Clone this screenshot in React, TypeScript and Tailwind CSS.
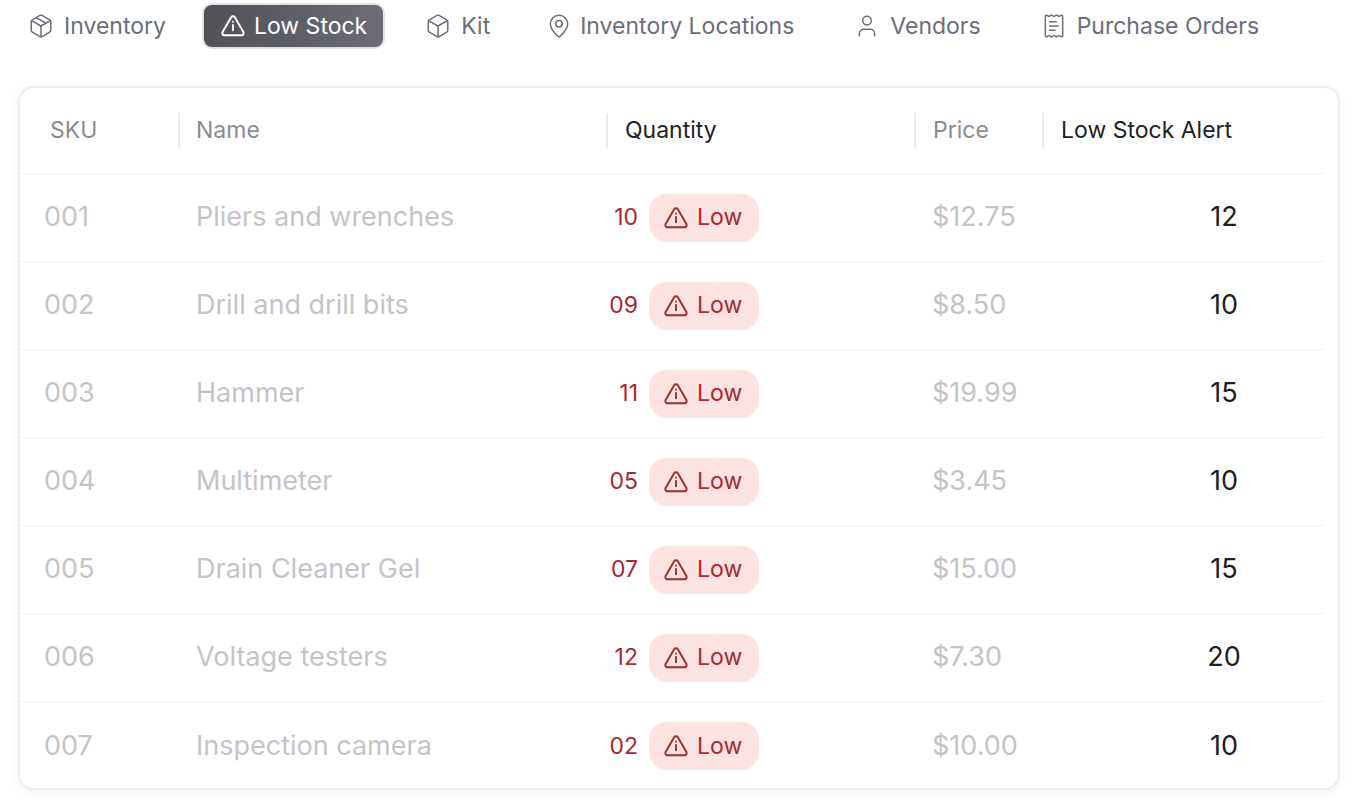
import { Package, Box, MapPin, User, ReceiptText } from "lucide-react";

function Warn({ className = "" }: { className?: string }) {
  return (
    <svg viewBox="0 0 24 24" fill="none" stroke="currentColor" strokeWidth={1.8} strokeLinecap="round" strokeLinejoin="round" className={className}>
      <path d="M10.3 3.9 2.4 17.6A2 2 0 0 0 4.1 20.6h15.8a2 2 0 0 0 1.7-3L13.7 3.9a2 2 0 0 0-3.4 0Z" />
      <path d="M12 11v5" />
      <path d="M12 8h.01" />
    </svg>
  );
}

const rows = [
  ["001", "Pliers and wrenches", "10", "$12.75", "12"],
  ["002", "Drill and drill bits", "09", "$8.50", "10"],
  ["003", "Hammer", "11", "$19.99", "15"],
  ["004", "Multimeter", "05", "$3.45", "10"],
  ["005", "Drain Cleaner Gel", "07", "$15.00", "15"],
  ["006", "Voltage testers", "12", "$7.30", "20"],
  ["007", "Inspection camera", "02", "$10.00", "10"],
];

export default function App() {
  const font = { fontFamily: "Inter, 'Noto Sans', sans-serif" };
  return (
    <div className="w-[1357px] h-[808px] bg-white overflow-hidden" style={font}>
      {/* tabs */}
      <div className="flex items-center h-[52px] pl-[28px] text-[23px] text-[#6b6e7a]">
        <div className="flex items-center gap-[10px] mr-[36px]"><Package size={26} strokeWidth={1.4} />Inventory</div>
        <div className="flex items-center gap-[8px] h-[46px] px-[16px] rounded-[10px] border-2 border-[#e2e2e6] bg-gradient-to-r from-[#505157] to-[#6c6d75] text-white mr-[40px]">
          <Warn className="w-[26px] h-[26px]" />Low Stock
        </div>
        <div className="flex items-center gap-[10px] mr-[56px]"><Box size={26} strokeWidth={1.4} />Kit</div>
        <div className="flex items-center gap-[8px] mr-[60px]"><MapPin size={26} strokeWidth={1.4} />Inventory Locations</div>
        <div className="flex items-center gap-[10px] mr-[60px]"><User size={26} strokeWidth={1.4} />Vendors</div>
        <div className="flex items-center gap-[10px]"><ReceiptText size={26} strokeWidth={1.4} />Purchase Orders</div>
      </div>
      {/* card */}
      <div className="mt-[34px] ml-[18px] w-[1322px] h-[704px] rounded-[16px] border-2 border-[#eeeef0] shadow-[0_2px_10px_rgba(0,0,0,0.06)] pr-[14px] overflow-hidden">
        <div className="flex items-center h-[86px] text-[23px] border-b border-[#f0f0f2]">
          <div className="w-[158px] shrink-0 pl-[30px] text-[#8a8b93]">SKU</div>
          <div className="w-[428px] shrink-0 pl-[16px] border-l-2 border-[#ececee] text-[#8a8b93]">Name</div>
          <div className="w-[308px] shrink-0 pl-[17px] border-l-2 border-[#ececee] text-[#222]">Quantity</div>
          <div className="w-[128px] shrink-0 pl-[17px] border-l-2 border-[#ececee] text-[#8a8b93]">Price</div>
          <div className="shrink-0 pl-[17px] border-l-2 border-[#ececee] text-[#222]">Low Stock Alert</div>
        </div>
        {rows.map((r, i) => (
          <div key={r[0]} className={`flex items-center h-[88px] text-[27px] ${i < rows.length - 1 ? "border-b border-[#f0f0f2]" : ""}`}>
            <div className="w-[158px] shrink-0 pl-[24px] text-[#c4c4c8]">{r[0]}</div>
            <div className="w-[428px] shrink-0 pl-[18px] text-[#c4c4c8]">{r[1]}</div>
            <div className="w-[308px] shrink-0 flex items-center">
              <span className="w-[32px] text-right text-[23px] text-[#a8292b]">{r[2]}</span>
              <span className="ml-[11px] flex items-center gap-[8px] h-[48px] w-[110px] pl-[14px] rounded-[18px] bg-[#fde2e2] text-[#a8292b] text-[23px]">
                <Warn className="w-[26px] h-[26px]" />Low
              </span>
            </div>
            <div className="w-[128px] shrink-0 pl-[18px] text-[#c4c4c8]">{r[3]}</div>
            <div className="w-[282px] shrink-0 pl-[82px] text-center text-[#1e1e22]">{r[4]}</div>
          </div>
        ))}
      </div>
    </div>
  );
}
